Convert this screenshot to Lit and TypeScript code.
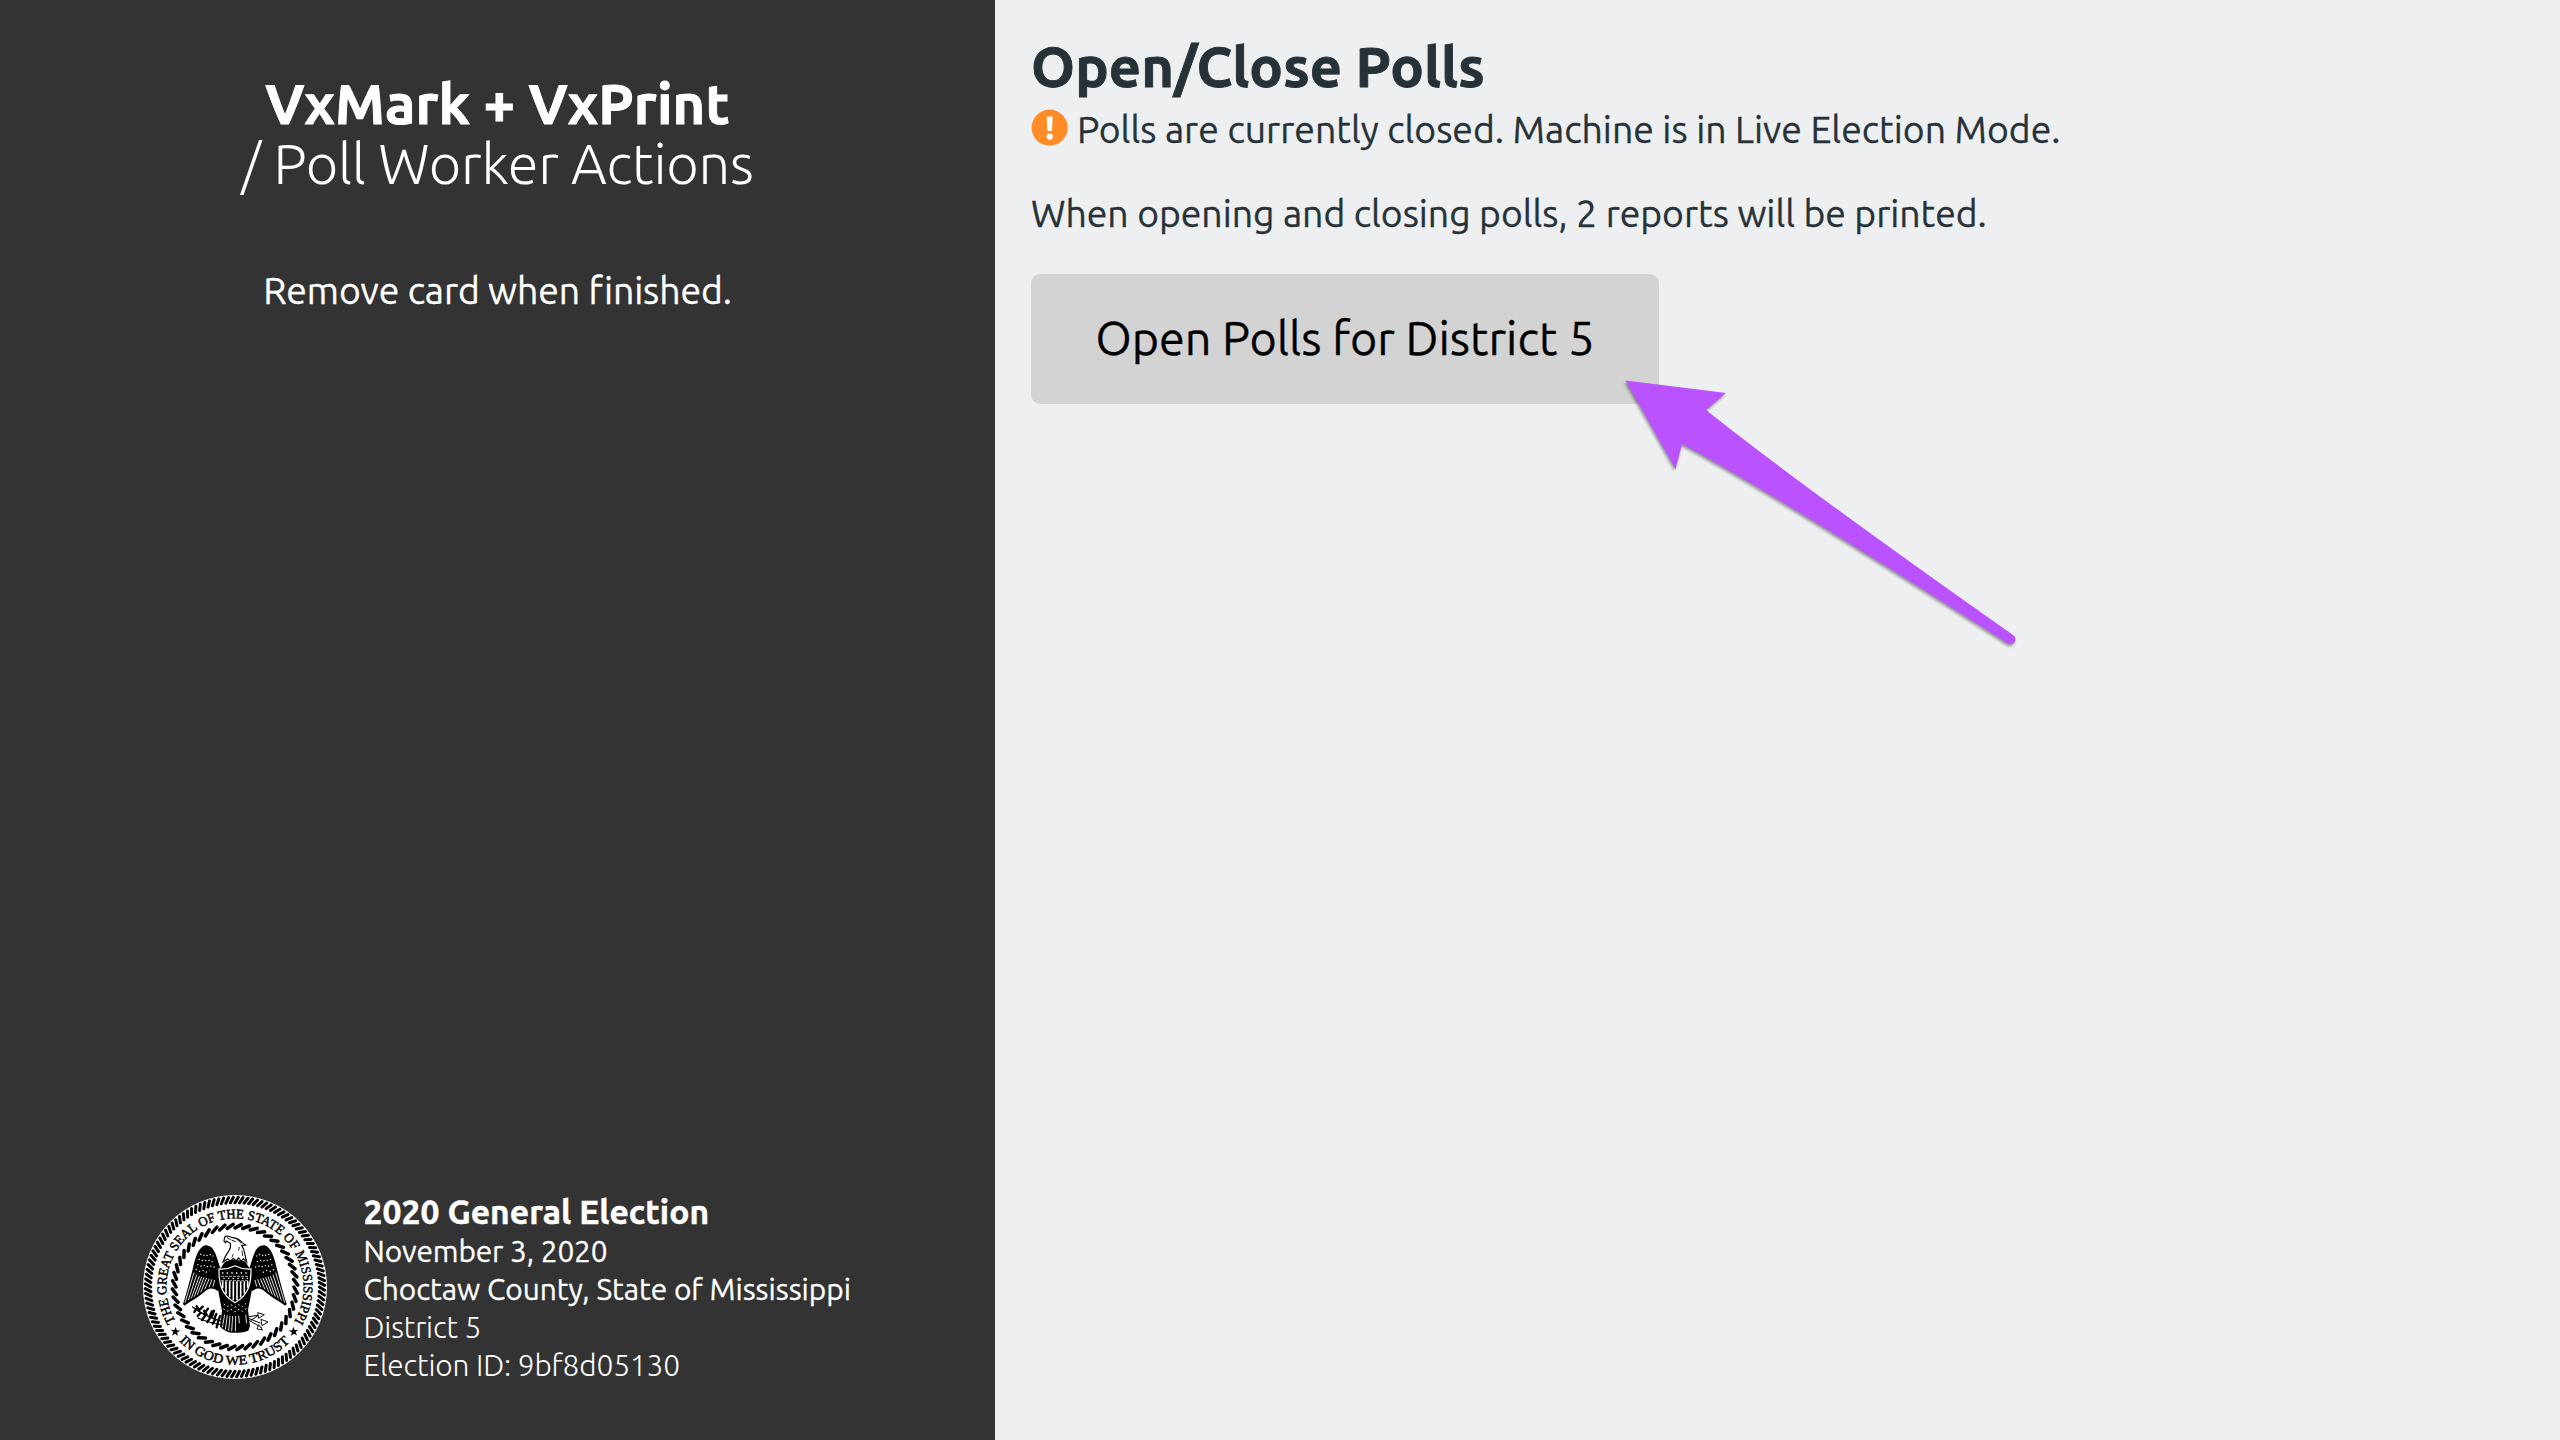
import { LitElement, html, svg, css } from "lit";
import { customElement, property } from "lit/decorators.js";

const CX = 315;
const CY = 321;

/** A ring of slanted strands, like a twisted rope. */
const rope = (count: number, inner: number, outer: number, twist: number) =>
  Array.from({ length: count }, (_, i) => {
    const a = (i / count) * Math.PI * 2;
    const b = a + twist;
    const x1 = CX + inner * Math.sin(a);
    const y1 = CY - inner * Math.cos(a);
    const x2 = CX + outer * Math.sin(b);
    const y2 = CY - outer * Math.cos(b);
    return `M${x1.toFixed(1)} ${y1.toFixed(1)}L${x2.toFixed(1)} ${y2.toFixed(1)}`;
  }).join("");

const polar = (r: number, deg: number) => {
  const a = (deg * Math.PI) / 180;
  return `${(CX + r * Math.sin(a)).toFixed(1)} ${(CY - r * Math.cos(a)).toFixed(1)}`;
};

const star = (cx: number, cy: number, r: number, turn = 0) =>
  Array.from({ length: 10 }, (_, i) => {
    const a = (i * Math.PI) / 5 + turn;
    const q = i % 2 ? r * 0.4 : r;
    return `${(cx + q * Math.sin(a)).toFixed(1)},${(cy - q * Math.cos(a)).toFixed(1)}`;
  }).join(" ");

@customElement("state-seal")
class StateSeal extends LitElement {
  static styles = css`
    :host {
      display: block;
      flex: none;
      width: 184px;
      height: 184px;
      margin-bottom: 2px;
      -webkit-text-stroke: 0;
    }
    svg {
      display: block;
      width: 100%;
      height: 100%;
    }
    text {
      font-family: "Liberation Serif", serif;
      font-size: 40px;
      letter-spacing: 0;
      fill: #000;
      stroke: #000;
      stroke-width: 1.4;
    }
  `;

  private wing() {
    return svg`
      <path d="M226 196C241 195 252 207 259 228L270 262L273 322L262 333C247 322 236 324 222 337C204 352 186 362 163 377L159 372C170 340 178 305 188 268C196 232 205 202 226 196Z"/>
      <g fill="none" stroke="#fff" stroke-width="2.6">
        <path d="M192 278L165 368M200 284L175 361M208 288L184 355M215 290L193 350M222 292L202 344M230 294L212 337M238 296L224 328M246 298L237 322M254 300L249 320"/>
        <path stroke-width="3.4" stroke-dasharray="4 8" d="M211 222L219 228L226 222L234 229L243 222L250 229M206 237L214 243L222 238L231 245L240 239L248 246M202 253L211 260L220 254L229 262L239 256L248 263L258 258M197 268L207 275L217 270L228 277L239 271"/>
      </g>`;
  }

  render() {
    return html`
      <svg viewBox="39 45 552 552" role="img" aria-label="State seal">
        <defs>
          <path id="upper" d="M${polar(206, -120)}A206 206 0 1 1 ${polar(206, 121)}" />
          <path id="lower" d="M${polar(233, 226)}A233 233 0 0 0 ${polar(233, 134)}" />
        </defs>
        <circle cx="315" cy="321" r="276" fill="#fff" />
        <path d=${rope(116, 253, 269, 0.036)} stroke="#000" stroke-width="9" stroke-linecap="round" />
        <path d=${rope(48, 177, 188, 0.1)} stroke="#000" stroke-width="10.5" stroke-linecap="round" />
        <text><textPath href="#upper" textLength="864" lengthAdjust="spacingAndGlyphs">THE GREAT SEAL OF THE STATE OF MISSISSIPPI</textPath></text>
        <text><textPath href="#lower" textLength="370" lengthAdjust="spacingAndGlyphs">IN GOD WE TRUST</textPath></text>
        <polygon points=${star(136, 455, 15, 0.1)} />
        <polygon points=${star(491, 455, 15, -0.1)} />

        ${this.wing()}
        <g transform="translate(629 0) scale(-1 1)">${this.wing()}</g>

        <path d="M262 318L276 392L270 440Q290 460 314 458Q338 460 355 452L360 438L354 390L368 318Z" />
        <path d="M277 257Q285 240 300 243Q315 236 332 243Q346 240 354 258L362 270L268 270Z" />
        <path
          d="M283 177Q283 169 291 168Q300 170 308 173Q325 175 336 187L347 195L335 196Q343 208 345 224L350 246L340 236L334 244L326 234L318 243L310 235L302 243L293 237L279 246Q285 228 297 212Q304 202 301 190L289 183L287 188L282 183Z"
          fill="#fff" stroke="#000" stroke-width="3.4" />
        <path d="M291 173L302 179M304 180L318 185M320 177L334 190M328 201L326 212M336 212L338 228M310 222L306 232" fill="none" stroke="#000" stroke-width="2.5" />
        <path d="M267 267Q292 269 315 257Q338 269 363 267Q364 300 355 325Q343 353 315 368Q286 352 275 325Q266 300 267 267Z" fill="#000" stroke="#fff" stroke-width="3.5" />
        <path d="M278 304V325M288 304V342M299 304V352M310 304V361M321 304V361M332 304V352M343 304V340M353 304V323" stroke="#fff" stroke-width="4.8" />
        <path d="M273 289H358M273 302H358" stroke="#fff" stroke-width="2" stroke-dasharray="9 3" />
        <path d="M276 279H358M280 295H358" stroke="#fff" stroke-width="4" stroke-dasharray="4 10" />
        <path d="M281 372L292 380L303 374L314 382L326 374L337 380L348 370M280 386L291 394L303 388L315 396L327 388L338 394L350 385" fill="none" stroke="#fff" stroke-width="3" stroke-dasharray="5 8" />
        <path d="M284 404L277 442M292 406L286 449M300 408L296 452M308 408L305 454M317 408L316 454M326 407L328 430M347 404L350 430" stroke="#fff" stroke-width="2.6" />

        <g fill="none" stroke="#000" stroke-linecap="round">
          <path stroke-width="4" d="M188 381Q228 412 276 424M204 414Q240 430 276 434" />
          <path stroke-width="7" d="M198 388L193 396M206 392L218 380M212 398L203 408M222 402L234 386M226 406L216 420M238 410L246 394M241 413L232 426M253 416L259 402M256 418L248 431M266 420L270 408M206 388L200 379M264 426L260 442M230 404L222 392M246 410L252 392" />
          <path stroke-width="3" d="M358 410L388 405M358 416L390 429M356 420L394 443M364 420L392 402" />
        </g>
        <path d="M383 398L403 404L386 415ZM393 418L414 426L396 437ZM386 434L398 450L381 447Z" fill="#fff" stroke="#000" stroke-width="2.8" />
      </svg>
    `;
  }
}

@customElement("election-info")
class ElectionInfo extends LitElement {
  static styles = css`
    :host {
      display: flex;
      align-items: center;
      gap: 36.5px;
      font-size: 29.87px;
      line-height: 38px;
      letter-spacing: -0.03px;
    }
    p {
      margin: 0;
    }
    .title {
      font-size: 33.6px;
      font-weight: 700;
      line-height: 40px;
      letter-spacing: 0.04px;
      -webkit-text-stroke: 0.5px;
    }
    .date {
      letter-spacing: -0.12px;
    }
    .light {
      font-weight: 300;
      letter-spacing: -0.13px;
      -webkit-text-stroke: 0;
    }
  `;

  render() {
    return html`
      <state-seal></state-seal>
      <div>
        <p class="title">2020 General Election</p>
        <p class="date">November 3, 2020</p>
        <p>Choctaw County, State of Mississippi</p>
        <p class="light">District 5</p>
        <p class="light">Election ID: 9bf8d05130</p>
      </div>
    `;
  }
}

@customElement("poll-button")
class PollButton extends LitElement {
  @property() label = "";

  static styles = css`
    :host {
      display: block;
    }
    button {
      display: block;
      width: 628px;
      height: 130px;
      padding: 0 0 2px;
      border: 0;
      border-radius: 9.3px;
      background: #d3d3d3;
      color: #000;
      font: 400 46.67px/56px Ubuntu, "Noto Sans", sans-serif;
    }
  `;

  render() {
    return html`<button type="button">${this.label}</button>`;
  }
}

@customElement("app-root")
class AppRoot extends LitElement {
  static styles = css`
    :host {
      position: relative;
      display: flex;
      width: 2560px;
      height: 1440px;
      overflow: hidden;
      background: #edeff0;
      color: #263238;
      font-family: Ubuntu, "Noto Sans", sans-serif;
      font-size: 37.33px;
      line-height: 48px;
      -webkit-text-stroke: 0.3px;
    }
    h1,
    p {
      margin: 0;
    }
    aside {
      box-sizing: border-box;
      flex: none;
      display: flex;
      flex-direction: column;
      justify-content: space-between;
      width: 995px;
      padding: 74px 0 56px;
      background: #333;
      color: #fff;
    }
    .intro {
      text-align: center;
    }
    h1 {
      font-size: 56px;
      font-weight: 700;
      line-height: 60px;
      letter-spacing: 0.1px;
      -webkit-text-stroke: 0.9px;
    }
    .intro h1 span {
      display: block;
      font-weight: 300;
      letter-spacing: -0.25px;
      -webkit-text-stroke: 0;
    }
    .intro p {
      margin-top: 72px;
      letter-spacing: -0.09px;
    }
    election-info {
      padding-left: 143px;
    }
    main {
      flex: 1;
      padding: 37px 36px 0;
    }
    .status {
      margin-top: 8px;
    }
    .status svg {
      width: 37.33px;
      height: 37.33px;
      vertical-align: -3.67px;
      stroke: none;
    }
    .note {
      margin-top: 36px;
      letter-spacing: -0.025px;
    }
    poll-button {
      margin-top: 37px;
    }
    .arrow {
      position: absolute;
      left: 1600px;
      top: 360px;
      width: 440px;
      height: 300px;
      filter: drop-shadow(-1px 2px 1.5px rgba(0, 0, 0, 0.4));
    }
  `;

  render() {
    return html`
      <aside>
        <div class="intro">
          <h1>VxMark + VxPrint <span>/ Poll Worker Actions</span></h1>
          <p>Remove card when finished.</p>
        </div>
        <election-info></election-info>
      </aside>
      <main>
        <h1>Open/Close Polls</h1>
        <p class="status"><svg viewBox="0 0 512 512" aria-hidden="true"><circle cx="256" cy="256" r="248" fill="#ff8c26" /><circle cx="256" cy="378" r="43" fill="#fff" /><path d="M222 104h68q7 0 7 7l-9 180q0 11-11 11h-42q-11 0-11-11l-9-180q0-7 7-7z" fill="#fff" /></svg> Polls are currently closed. Machine is in Live Election Mode.</p>
        <p class="note">When opening and closing polls, 2 reports will be printed.</p>
        <poll-button label="Open Polls for District 5"></poll-button>
      </main>
      <svg class="arrow" viewBox="0 0 440 300" aria-hidden="true">
        <path
          d="M25.5 20.5L126 33L106 50Q200 125 413 275A4.8 4.8 0 0 1 408 283.500Q170 131 82 84L75.500 109Z"
          fill="#ba52ff" />
      </svg>
    `;
  }
}
